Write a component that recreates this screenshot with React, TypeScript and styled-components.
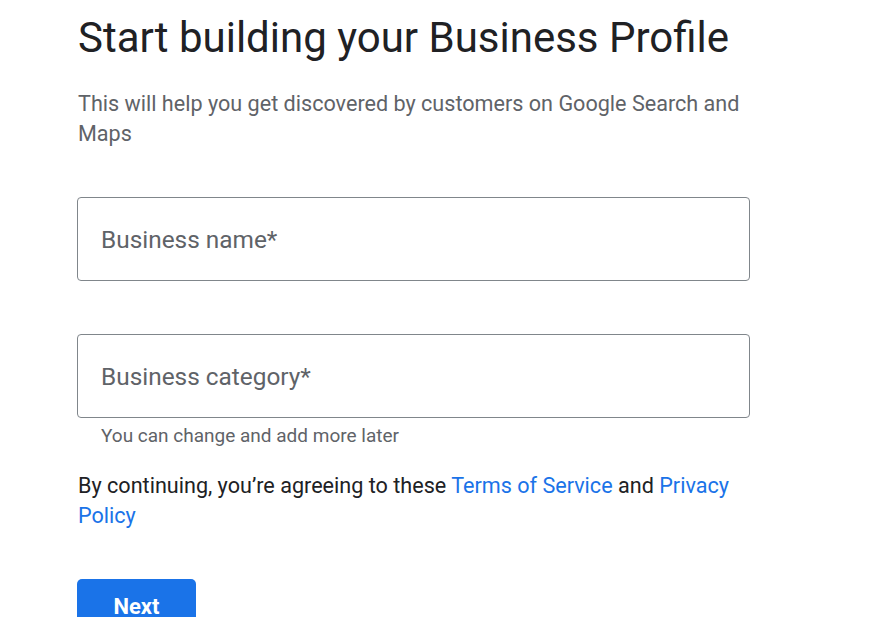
import React from "react";
import styled, { createGlobalStyle } from "styled-components";

const Global = createGlobalStyle`
  html, body { margin: 0; padding: 0; background: #fff; }
  body { font-family: Roboto, "Noto Sans", Arial, sans-serif; overflow: hidden; }
`;

const Page = styled.main`
  width: 672px;
  padding: 12px 0 0 78px;
  display: flex;
  flex-direction: column;
`;

const Title = styled.h1`
  margin: 0;
  font-family: Roboto, "Open Sans", sans-serif;
  font-weight: 400;
  font-size: 42px;
  line-height: 52px;
  color: #202124;
  white-space: nowrap;
`;

const Subtitle = styled.p`
  margin: 25px 0 0;
  font-size: 21.6px;
  line-height: 30px;
  color: #5f6368;
`;

const Field = styled.div<{ $top: number }>`
  margin-top: ${(p) => p.$top}px;
  margin-left: -1px;
  height: 84px;
  box-sizing: border-box;
  border: 1px solid #80868b;
  border-radius: 4px;
  display: flex;
  align-items: center;
  padding: 0 23px;
`;

const Label = styled.span`
  font-size: 24.4px;
  color: #5f6368;
`;

const Helper = styled.div`
  margin: 8px 0 0 23px;
  font-size: 19px;
  line-height: 20px;
  color: #5f6368;
`;

const Terms = styled.p`
  margin: 25px 0 0;
  font-size: 21.6px;
  line-height: 30px;
  color: #202124;
`;

const Link = styled.a`
  color: #1a73e8;
  text-decoration: none;
`;

const Button = styled.button`
  margin-top: 48px;
  margin-left: -1px;
  width: 119px;
  height: 54px;
  border: none;
  border-radius: 5px;
  background: #1a73e8;
  color: #fff;
  font-family: Roboto, sans-serif;
  font-weight: 700;
  font-size: 22px;
  padding: 0;
`;

export default function App() {
  return (
    <>
      <Global />
      <Page>
        <Title>Start building your Business Profile</Title>
        <Subtitle>
          This will help you get discovered by customers on Google Search and Maps
        </Subtitle>
        <Field $top={48}>
          <Label>Business name*</Label>
        </Field>
        <Field $top={53}>
          <Label>Business category*</Label>
        </Field>
        <Helper>You can change and add more later</Helper>
        <Terms>
          By continuing, you’re agreeing to these <Link href="#">Terms of Service</Link> and{" "}
          <Link href="#">Privacy Policy</Link>
        </Terms>
        <Button>Next</Button>
      </Page>
    </>
  );
}
